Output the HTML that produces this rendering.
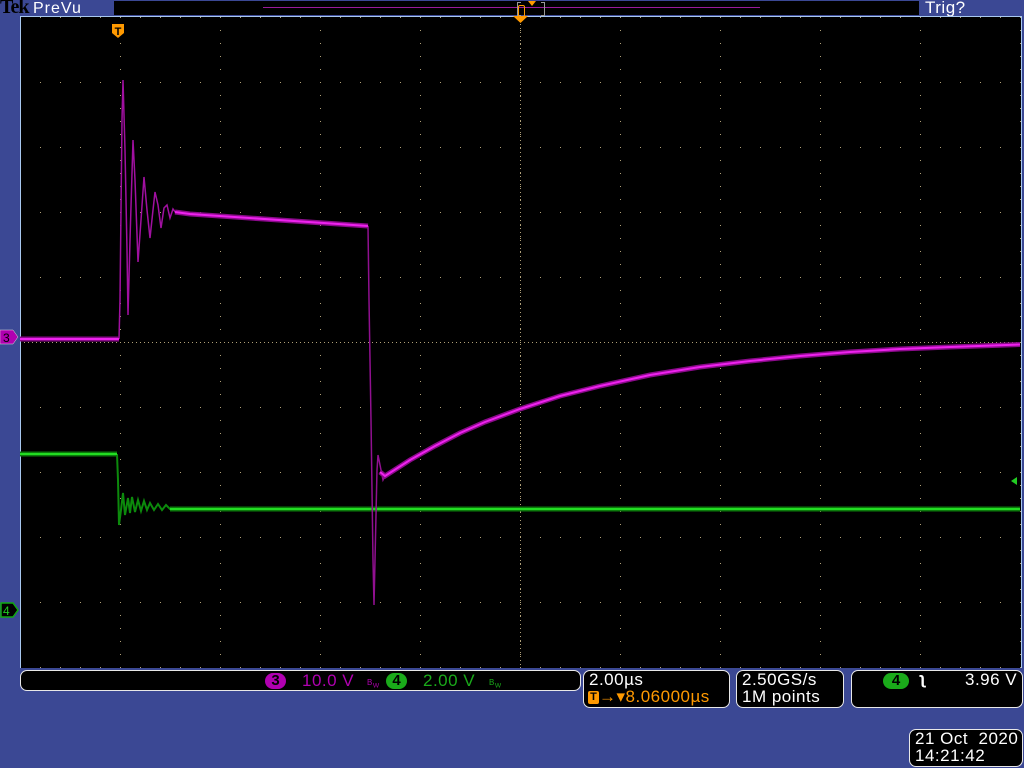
<!DOCTYPE html>
<html><head><meta charset="utf-8"><style>
html,body{margin:0;padding:0}
body{width:1024px;height:768px;background:#3b4894;position:relative;overflow:hidden;font-family:"Liberation Sans",sans-serif}
.t{position:absolute;white-space:nowrap;font-size:17px;line-height:17px;letter-spacing:0.5px}
.box{position:absolute;background:#000;border:1px solid #e8e8e8;border-radius:7px}
.pill{position:absolute;border-radius:9px;color:#000;font-size:15px;text-align:center;line-height:16px;font-weight:bold}
</style></head><body>
<div class="t" style="left:0;top:-1px;font-family:'Liberation Serif',serif;font-size:20px;font-weight:bold;color:#000;letter-spacing:-1px">Tek</div>
<div class="t" style="left:33px;top:0;color:#fff;font-size:16px;letter-spacing:1px">PreVu</div>
<div style="position:absolute;left:114px;top:1px;width:805px;height:14px;background:#000"></div>
<div style="position:absolute;left:263px;top:7px;width:497px;height:1px;background:#9a1a9a"></div>
<div style="position:absolute;left:517px;top:2px;width:3px;height:12px;border:1px solid #999;border-right:none"></div>
<div style="position:absolute;left:541px;top:2px;width:3px;height:12px;border:1px solid #999;border-left:none"></div>
<div style="position:absolute;left:518px;top:5px;width:5px;height:10px;border:1px solid #f90;border-radius:2px"></div>
<div style="position:absolute;left:528px;top:1px;width:0;height:0;border-left:4px solid transparent;border-right:4px solid transparent;border-top:5px solid #f90"></div>
<div class="t" style="left:925px;top:-1px;color:#fff;font-size:17px">Trig?</div>
<svg style="position:absolute;left:0;top:0" width="1024" height="768">
<defs>
<pattern id="ph" x="20" y="17" width="20" height="65" patternUnits="userSpaceOnUse"><rect width="1" height="1" fill="#b0a078"/></pattern>
<pattern id="pv" x="20" y="17" width="100" height="13" patternUnits="userSpaceOnUse"><rect width="1" height="1" fill="#b0a078"/></pattern>
</defs>
<rect x="20" y="16" width="1002" height="652" fill="#000"/>
<rect x="20" y="16" width="1002" height="652" fill="url(#ph)"/>
<rect x="20" y="16" width="1002" height="652" fill="url(#pv)"/>
<line x1="20" y1="342.5" x2="1022" y2="342.5" stroke="#b0a078" stroke-dasharray="1 3"/>
<line x1="520.5" y1="16" x2="520.5" y2="668" stroke="#b0a078" stroke-dasharray="1 3"/>
<path d="M20.5 16V668M20 16.5H1022M1021.5 16V668" stroke="#a8c8f0" fill="none"/>
<g fill="none">
<path d="M117,454 L118,480 L119,525 L121,510 L123,493 L125,515 L128,498 L130,513 L132,497 L135,512 L138,500 L141,511 L144,501 L147,510 L150,503 L154,510 L158,504 L162,510 L166,505 L170,509 L180,509" stroke="#0c8a0c" stroke-width="2"/>
<path d="M20,454 L117,454" stroke="#0c7a0c" stroke-width="5"/><path d="M20,454 L117,454" stroke="#22dd22" stroke-width="2"/>
<path d="M170,509 L1020,509" stroke="#0c7a0c" stroke-width="5"/><path d="M170,509 L1020,509" stroke="#22dd22" stroke-width="2"/>
<path d="M119,339 L120,300 L122,120 L123,80 L125,150 L127,250 L128,315 L130,240 L133,140 L135,180 L138,262 L141,220 L144,177 L147,210 L150,238 L153,210 L155,192 L158,205 L161,228 L164,208 L167,205 L170,218 L173,209 L176,213 L180,212" stroke="#a010a0" stroke-width="1.5"/>
<path d="M368,226 L369,300 L371,420 L373,560 L374,605 L375,560 L377,470 L378,455 L380,465 L383,480 L385,476" stroke="#901090" stroke-width="1.5"/>
<path d="M20,339 L119,339" stroke="#8a0a8a" stroke-width="5"/><path d="M20,339 L119,339" stroke="#ee22ee" stroke-width="2"/>
<path d="M175,212 L190,214 L368,226" stroke="#8a0a8a" stroke-width="5"/><path d="M175,212 L190,214 L368,226" stroke="#ee22ee" stroke-width="2"/>
<path d="M380,472 L385,476 L410,460 L435,446 L460,433 L485,422 L520,409 L560,396 L600,386 L650,375 L700,367 L750,361 L800,356 L850,352 L900,349 L950,347 L1020,344.5" stroke="#8a0a8a" stroke-width="5"/>
<path d="M380,472 L385,476 L410,460 L435,446 L460,433 L485,422 L520,409 L560,396 L600,386 L650,375 L700,367 L750,361 L800,356 L850,352 L900,349 L950,347 L1020,344.5" stroke="#ee22ee" stroke-width="2"/>
</g>
<path d="M112,24h12v9l-6,5l-6,-5z" fill="#f90"/>
<text x="118" y="35" font-family="Liberation Sans" font-size="11" font-weight="bold" text-anchor="middle" fill="#000">T</text>
<path d="M513,16h15l-7.5,7z" fill="#f90"/>
<path d="M0,330h13l5,7l-5,7h-13z" fill="#b000b0" stroke="#ddd" stroke-width="0.5"/>
<text x="3" y="342" font-family="Liberation Sans" font-size="12" fill="#000">3</text>
<path d="M1,603h12l5,7l-5,7h-12z" fill="#000" stroke="#1a1" stroke-width="1.5"/>
<text x="3" y="615" font-family="Liberation Sans" font-size="12" fill="#2c2">4</text>
<path d="M1011,481l6,-4v8z" fill="#2c2"/>
</svg>
<div class="box" style="left:20px;top:670px;width:559px;height:19px"></div>
<div class="pill" style="left:265px;top:673px;width:21px;background:#b000b0">3</div>
<div class="t" style="left:302px;top:672px;color:#b000b0">10.0 V</div>
<div class="t" style="left:367px;top:674px;color:#b000b0;font-size:8px">B<sub>W</sub></div>
<div class="pill" style="left:386px;top:673px;width:21px;background:#1aaa1a">4</div>
<div class="t" style="left:423px;top:672px;color:#1aaa1a">2.00 V</div>
<div class="t" style="left:489px;top:674px;color:#1aaa1a;font-size:8px">B<sub>W</sub></div>
<div class="box" style="left:583px;top:670px;width:145px;height:36px"></div>
<div class="t" style="left:589px;top:671px;color:#fff">2.00µs</div>
<div style="position:absolute;left:588px;top:691px;width:11px;height:13px;background:#f90;border-radius:2px;color:#000;font-size:11px;font-weight:bold;text-align:center;line-height:13px">T</div>
<div class="t" style="left:599px;top:688px;color:#f90">→▾8.06000µs</div>
<div class="box" style="left:736px;top:670px;width:106px;height:36px"></div>
<div class="t" style="left:742px;top:671px;color:#fff">2.50GS/s</div>
<div class="t" style="left:742px;top:688px;color:#fff">1M points</div>
<div class="box" style="left:851px;top:670px;width:170px;height:36px"></div>
<div class="pill" style="left:883px;top:673px;width:26px;background:#1aaa1a">4</div>
<div class="t" style="left:920px;top:670px;color:#fff;font-weight:bold">ʅ</div>
<div class="t" style="left:965px;top:671px;color:#fff">3.96 V</div>
<div class="box" style="left:909px;top:729px;width:112px;height:36px"></div>
<div class="t" style="left:915px;top:730px;color:#fff">21 Oct&nbsp; 2020</div>
<div class="t" style="left:915px;top:747px;color:#fff">14:21:42</div>
</body></html>
